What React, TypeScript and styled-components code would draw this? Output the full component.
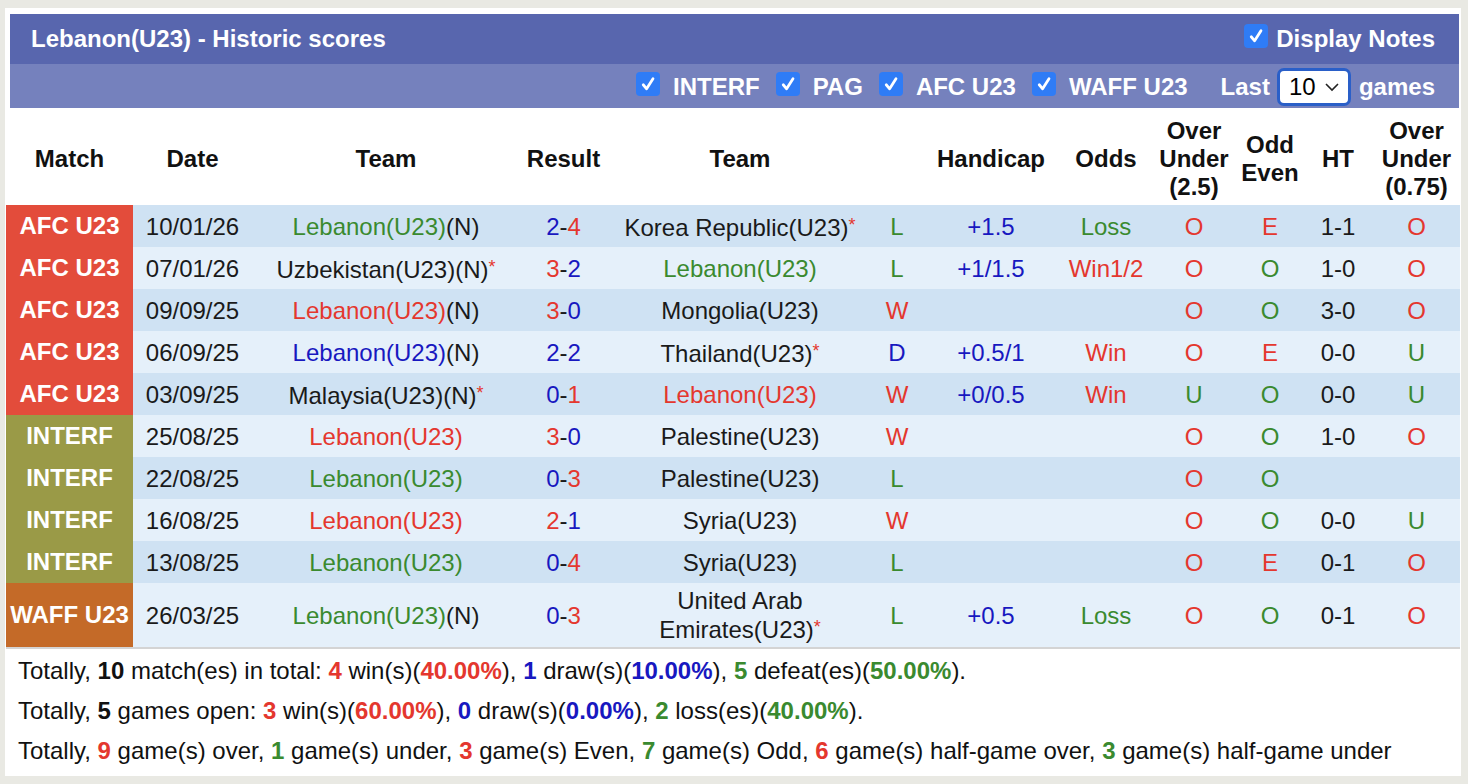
import React from "react";
import styled, { createGlobalStyle } from "styled-components";

const GlobalStyle = createGlobalStyle`
  html, body { margin: 0; padding: 0; background: #e9e9e3; }
  body { font-family: "Liberation Sans", Arial, sans-serif; }
`;

const C = {
  red: "#e4372e",
  green: "#3a8a2f",
  blue: "#1818c0",
  black: "#1a1a1a",
};

const Page = styled.div`
  margin: 8px 0 0 5px;
  width: 1456px;
  height: 768px;
  background: #fff;
  box-sizing: border-box;
  padding-top: 6px;
`;

const TitleBar = styled.div`
  margin: 0 2px 0 5px;
  height: 50px;
  background: #5866ae;
  display: flex;
  align-items: center;
  justify-content: space-between;
  padding: 0 24px 0 21px;
  color: #fff;
  font-weight: bold;
  font-size: 24px;
`;

const SubBar = styled.div`
  margin: 0 2px 0 5px;
  height: 44px;
  background: #7581bd;
  display: flex;
  align-items: center;
  justify-content: flex-end;
  padding: 2px 24px 0 21px;
  box-sizing: border-box;
  color: #fff;
  font-weight: bold;
  font-size: 24px;
`;

const Opt = styled.label<{ $gap?: number; $inner?: number }>`
  display: flex;
  align-items: center;
  gap: ${(p) => p.$inner ?? 13}px;
  margin-left: ${(p) => p.$gap ?? 16}px;
`;

const Box = styled.span`
  width: 24px;
  height: 24px;
  border-radius: 4px;
  background: #2f7cf6;
  display: inline-flex;
  align-items: center;
  justify-content: center;
  margin-top: -7px;
`;

const Check = () => (
  <Box>
    <svg width="18" height="18" viewBox="0 0 17 17">
      <path d="M4 9.2 L7.2 13 L13.2 3.5" fill="none" stroke="#fff" strokeWidth="2.6" strokeLinecap="round" strokeLinejoin="round" />
    </svg>
  </Box>
);

const LastText = styled.span`
  margin-left: 33px;
`;

const Select = styled.div`
  margin: 0 8px 0 7px;
  width: 74px;
  height: 38px;
  box-sizing: border-box;
  border: 3px solid #2a5fc8;
  border-radius: 7px;
  background: #fff;
  color: #000;
  font-weight: normal;
  font-size: 24px;
  display: flex;
  align-items: center;
  justify-content: space-between;
  padding: 0 8px 0 9px;
`;

const Table = styled.table`
  margin-left: 1px;
  width: 1454px;
  border-collapse: collapse;
  table-layout: fixed;
  font-size: 24px;
`;

const Th = styled.th`
  height: 93px;
  padding: 4px 0 0;
  font-size: 24px;
  line-height: 28px;
  font-weight: bold;
  color: #111;
  text-align: center;
  vertical-align: middle;
  background: #fff;
`;

const Tr = styled.tr<{ $alt: boolean }>`
  background: ${(p) => (p.$alt ? "#e5f0fa" : "#cfe2f3")};
`;

const Td = styled.td<{ $c?: string }>`
  height: 42px;
  box-sizing: border-box;
  padding: 4px 2px;
  line-height: 27px;
  text-align: center;
  vertical-align: middle;
  color: ${(p) => p.$c ?? C.black};
`;

const MatchTd = styled.td<{ $bg: string }>`
  padding: 0;
  background: ${(p) => p.$bg};
  color: #fff;
  font-weight: bold;
  font-size: 24px;
  text-align: center;
  vertical-align: middle;
`;

const Col = styled.span<{ $c: string }>`
  color: ${(p) => p.$c};
`;

const Star = styled.span`
  color: ${C.red};
  font-size: 18px;
  vertical-align: 5px;
`;

const LastRow = styled.tr`
  border-bottom: 2px solid #d4d4d4;
`;

const Footer = styled.div`
  margin-left: 1px;
  width: 1453px;
  padding: 2px 0 0 12px;
  box-sizing: border-box;
  font-size: 24px;
  color: #111;
`;

const Line = styled.div`
  line-height: 40px;
  height: 40px;
  white-space: nowrap;
`;

const B = styled.b<{ $c?: string }>`
  color: ${(p) => p.$c ?? "#111"};
`;

type Row = {
  m: "AFC U23" | "INTERF" | "WAFF U23";
  d: string;
  h: string;
  hc?: string;
  hn?: boolean;
  hs?: boolean;
  a: string;
  ac?: string;
  an?: boolean;
  as?: boolean;
  s: [number, number];
  r: "W" | "L" | "D";
  hcp: string;
  odds: string;
  ou: string;
  oe: string;
  ht: string;
  ou2: string;
};

const rows: Row[] = [
  { m: "AFC U23", d: "10/01/26", h: "Lebanon(U23)", hc: C.green, hn: true, a: "Korea Republic(U23)", as: true, s: [2, 4], r: "L", hcp: "+1.5", odds: "Loss", ou: "O", oe: "E", ht: "1-1", ou2: "O" },
  { m: "AFC U23", d: "07/01/26", h: "Uzbekistan(U23)", hn: true, hs: true, a: "Lebanon(U23)", ac: C.green, s: [3, 2], r: "L", hcp: "+1/1.5", odds: "Win1/2", ou: "O", oe: "O", ht: "1-0", ou2: "O" },
  { m: "AFC U23", d: "09/09/25", h: "Lebanon(U23)", hc: C.red, hn: true, a: "Mongolia(U23)", s: [3, 0], r: "W", hcp: "", odds: "", ou: "O", oe: "O", ht: "3-0", ou2: "O" },
  { m: "AFC U23", d: "06/09/25", h: "Lebanon(U23)", hc: C.blue, hn: true, a: "Thailand(U23)", as: true, s: [2, 2], r: "D", hcp: "+0.5/1", odds: "Win", ou: "O", oe: "E", ht: "0-0", ou2: "U" },
  { m: "AFC U23", d: "03/09/25", h: "Malaysia(U23)", hn: true, hs: true, a: "Lebanon(U23)", ac: C.red, s: [0, 1], r: "W", hcp: "+0/0.5", odds: "Win", ou: "U", oe: "O", ht: "0-0", ou2: "U" },
  { m: "INTERF", d: "25/08/25", h: "Lebanon(U23)", hc: C.red, a: "Palestine(U23)", s: [3, 0], r: "W", hcp: "", odds: "", ou: "O", oe: "O", ht: "1-0", ou2: "O" },
  { m: "INTERF", d: "22/08/25", h: "Lebanon(U23)", hc: C.green, a: "Palestine(U23)", s: [0, 3], r: "L", hcp: "", odds: "", ou: "O", oe: "O", ht: "", ou2: "" },
  { m: "INTERF", d: "16/08/25", h: "Lebanon(U23)", hc: C.red, a: "Syria(U23)", s: [2, 1], r: "W", hcp: "", odds: "", ou: "O", oe: "O", ht: "0-0", ou2: "U" },
  { m: "INTERF", d: "13/08/25", h: "Lebanon(U23)", hc: C.green, a: "Syria(U23)", s: [0, 4], r: "L", hcp: "", odds: "", ou: "O", oe: "E", ht: "0-1", ou2: "O" },
  { m: "WAFF U23", d: "26/03/25", h: "Lebanon(U23)", hc: C.green, hn: true, a: "United Arab Emirates(U23)", as: true, s: [0, 3], r: "L", hcp: "+0.5", odds: "Loss", ou: "O", oe: "O", ht: "0-1", ou2: "O" },
];

const matchBg: Record<Row["m"], string> = {
  "AFC U23": "#e34c3b",
  INTERF: "#9a9a47",
  "WAFF U23": "#c46a28",
};

const resColor = { W: C.red, L: C.green, D: C.blue };
const ouColor = (v: string) => (v === "O" ? C.red : C.green);
const oeColor = (v: string) => (v === "E" ? C.red : C.green);
const oddsColor = (v: string) => (v.startsWith("Win") ? C.red : C.green);
const scoreColor = (me: number, other: number) => (me > other ? C.red : C.blue);

const widths = [127, 119, 268, 87, 266, 48, 140, 90, 86, 66, 70, 87];

function TeamCell({ name, color, n, star }: { name: string; color?: string; n?: boolean; star?: boolean }) {
  return (
    <Td>
      <Col $c={color ?? C.black}>{name}</Col>
      {n && "(N)"}
      {star && <Star>*</Star>}
    </Td>
  );
}

export default function App() {
  return (
    <>
      <GlobalStyle />
      <Page>
        <TitleBar>
          <span>Lebanon(U23) - Historic scores</span>
          <Opt $gap={0} $inner={8}>
            <Check />
            <span>Display Notes</span>
          </Opt>
        </TitleBar>
        <SubBar>
          <Opt $gap={0}><Check /><span>INTERF</span></Opt>
          <Opt><Check /><span>PAG</span></Opt>
          <Opt><Check /><span>AFC U23</span></Opt>
          <Opt><Check /><span>WAFF U23</span></Opt>
          <LastText>Last</LastText>
          <Select>
            <span>10</span>
            <svg width="16" height="10" viewBox="0 0 16 10">
              <path d="M2 2 L8 8 L14 2" fill="none" stroke="#222" strokeWidth="1.6" />
            </svg>
          </Select>
          <span>games</span>
        </SubBar>
        <Table>
          <colgroup>
            {widths.map((w, i) => (
              <col key={i} style={{ width: w }} />
            ))}
          </colgroup>
          <thead>
            <tr>
              <Th>Match</Th>
              <Th>Date</Th>
              <Th>Team</Th>
              <Th>Result</Th>
              <Th>Team</Th>
              <Th></Th>
              <Th>Handicap</Th>
              <Th>Odds</Th>
              <Th>Over<br />Under<br />(2.5)</Th>
              <Th>Odd<br />Even</Th>
              <Th>HT</Th>
              <Th>Over<br />Under<br />(0.75)</Th>
            </tr>
          </thead>
          <tbody>
            {rows.map((r, i) => {
              const RowTag = i === rows.length - 1 ? LastRow : "tr";
              return (
                <Tr key={i} $alt={i % 2 === 1} as={RowTag as any}>
                  <MatchTd $bg={matchBg[r.m]}>{r.m}</MatchTd>
                  <Td>{r.d}</Td>
                  <TeamCell name={r.h} color={r.hc} n={r.hn} star={r.hs} />
                  <Td>
                    <Col $c={scoreColor(r.s[0], r.s[1])}>{r.s[0]}</Col>-
                    <Col $c={scoreColor(r.s[1], r.s[0])}>{r.s[1]}</Col>
                  </Td>
                  <TeamCell name={r.a} color={r.ac} n={r.an} star={r.as} />
                  <Td $c={resColor[r.r]}>{r.r}</Td>
                  <Td $c={C.blue}>{r.hcp}</Td>
                  <Td $c={oddsColor(r.odds)}>{r.odds}</Td>
                  <Td $c={ouColor(r.ou)}>{r.ou}</Td>
                  <Td $c={oeColor(r.oe)}>{r.oe}</Td>
                  <Td>{r.ht}</Td>
                  <Td $c={ouColor(r.ou2)}>{r.ou2}</Td>
                </Tr>
              );
            })}
          </tbody>
        </Table>
        <Footer>
          <Line>
            Totally, <B>10</B> match(es) in total: <B $c={C.red}>4</B> win(s)(<B $c={C.red}>40.00%</B>), <B $c={C.blue}>1</B> draw(s)(<B $c={C.blue}>10.00%</B>), <B $c={C.green}>5</B> defeat(es)(<B $c={C.green}>50.00%</B>).
          </Line>
          <Line>
            Totally, <B>5</B> games open: <B $c={C.red}>3</B> win(s)(<B $c={C.red}>60.00%</B>), <B $c={C.blue}>0</B> draw(s)(<B $c={C.blue}>0.00%</B>), <B $c={C.green}>2</B> loss(es)(<B $c={C.green}>40.00%</B>).
          </Line>
          <Line>
            Totally, <B $c={C.red}>9</B> game(s) over, <B $c={C.green}>1</B> game(s) under, <B $c={C.red}>3</B> game(s) Even, <B $c={C.green}>7</B> game(s) Odd, <B $c={C.red}>6</B> game(s) half-game over, <B $c={C.green}>3</B> game(s) half-game under
          </Line>
        </Footer>
      </Page>
    </>
  );
}
